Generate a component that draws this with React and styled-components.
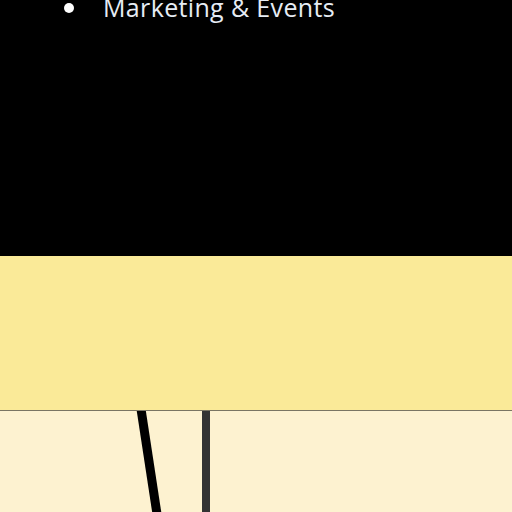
import React from 'react';
import styled, { createGlobalStyle } from 'styled-components';

const GlobalStyle = createGlobalStyle`
  html, body {
    margin: 0;
    padding: 0;
    background: #fdf2d0;
    overflow: hidden;
  }
`;

const Page = styled.div`
  width: 512px;
  height: 512px;
  display: flex;
  flex-direction: column;
  overflow: hidden;
`;

const DarkSection = styled.section`
  height: 256px;
  background: #000;
  overflow: hidden;
`;

const TopicList = styled.ul`
  list-style: none;
  margin: -12px 0 0;
  padding: 0 0 0 64px;
`;

const TopicItem = styled.li`
  display: flex;
  align-items: center;
  gap: 29px;
  height: 38px;
  color: #e6ecf4;
  font-family: "Open Sans", "Noto Sans", sans-serif;
  font-size: 25px;
  letter-spacing: 0.35px;
  white-space: nowrap;
`;

const Bullet = styled.span`
  width: 10px;
  height: 10px;
  margin-top: 2px;
  border-radius: 50%;
  background: #fff;
  flex-shrink: 0;
`;

const Band = styled.div`
  height: 154px;
  background: #faea98;
  border-bottom: 1px solid #7a7563;
`;

const Canvas = styled.div`
  flex: 1;
  background: #fdf2d0;
`;

const Strokes = styled.svg`
  display: block;
  width: 512px;
  height: 101px;
`;

export default function App() {
  return (
    <>
      <GlobalStyle />
      <Page>
        <DarkSection>
          <TopicList>
            <TopicItem>
              <Bullet />
              Marketing &amp; Events
            </TopicItem>
          </TopicList>
        </DarkSection>
        <Band />
        <Canvas>
          <Strokes viewBox="0 0 512 101">
            <line x1="141" y1="-2" x2="157" y2="103" stroke="#000" strokeWidth="9" />
            <line x1="206" y1="0" x2="206" y2="101" stroke="#333" strokeWidth="8" />
          </Strokes>
        </Canvas>
      </Page>
    </>
  );
}
